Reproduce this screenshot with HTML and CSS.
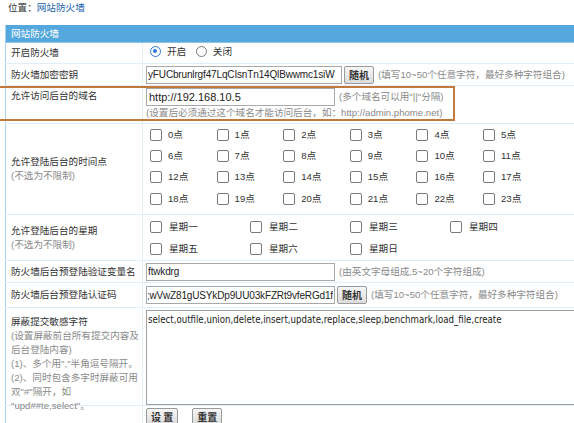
FILE: index.html
```html
<!DOCTYPE html>
<html lang="zh">
<head>
<meta charset="utf-8">
<link rel="stylesheet" href="styles.css">
</head>
<body>
<div class="page">
  <div class="crumb">位置：<a class="link">网站防火墙</a></div>
  <table class="form">
    <colgroup><col class="c1"><col class="c2"></colgroup>
    <tr class="head"><td colspan="2">网站防火墙</td></tr>
    <tr class="r-open">
      <td class="lab">开启防火墙</td>
      <td class="val">
        <span class="radio"><span class="rdo on"></span>开启</span>
        <span class="radio"><span class="rdo"></span>关闭</span>
      </td>
    </tr>
    <tr class="r-key">
      <td class="lab">防火墙加密密钥</td>
      <td class="val"><span class="line"><input class="txt key w196" value="yFUCbrunlrgf47LqCIsnTn14QlBwwmc1siW"><button class="btn">随机</button><span class="hint">(填写10~50个任意字符，最好多种字符组合)</span></span></td>
    </tr>
    <tr class="r-domain">
      <td class="lab top">允许访问后台的域名</td>
      <td class="val top">
        <span class="line"><input class="txt w188" value="http://192.168.10.5"><span class="hint">(多个域名可以用"||"分隔)</span></span>
        <div class="hint sub">(设置后必须通过这个域名才能访问后台，如：http://admin.phome.net)</div>
      </td>
    </tr>
    <tr class="r-time">
      <td class="lab">允许登陆后台的时间点<div class="hint">(不选为不限制)</div></td>
      <td class="val top">
        <div class="hours">
          <span class="ck"><span class="box"></span>0点</span><span class="ck"><span class="box"></span>1点</span><span class="ck"><span class="box"></span>2点</span><span class="ck"><span class="box"></span>3点</span><span class="ck"><span class="box"></span>4点</span><span class="ck"><span class="box"></span>5点</span>
          <span class="ck"><span class="box"></span>6点</span><span class="ck"><span class="box"></span>7点</span><span class="ck"><span class="box"></span>8点</span><span class="ck"><span class="box"></span>9点</span><span class="ck"><span class="box"></span>10点</span><span class="ck"><span class="box"></span>11点</span>
          <span class="ck"><span class="box"></span>12点</span><span class="ck"><span class="box"></span>13点</span><span class="ck"><span class="box"></span>14点</span><span class="ck"><span class="box"></span>15点</span><span class="ck"><span class="box"></span>16点</span><span class="ck"><span class="box"></span>17点</span>
          <span class="ck"><span class="box"></span>18点</span><span class="ck"><span class="box"></span>19点</span><span class="ck"><span class="box"></span>20点</span><span class="ck"><span class="box"></span>21点</span><span class="ck"><span class="box"></span>22点</span><span class="ck"><span class="box"></span>23点</span>
        </div>
      </td>
    </tr>
    <tr class="r-week">
      <td class="lab">允许登陆后台的星期<div class="hint">(不选为不限制)</div></td>
      <td class="val top">
        <div class="weeks">
          <span class="ck"><span class="box"></span>星期一</span><span class="ck"><span class="box"></span>星期二</span><span class="ck"><span class="box"></span>星期三</span><span class="ck"><span class="box"></span>星期四</span>
          <span class="ck"><span class="box"></span>星期五</span><span class="ck"><span class="box"></span>星期六</span><span class="ck"><span class="box"></span>星期日</span>
        </div>
      </td>
    </tr>
    <tr class="r-var">
      <td class="lab">防火墙后台预登陆验证变量名</td>
      <td class="val"><span class="line"><input class="txt key w188" value="ftwkdrg"><span class="hint">(由英文字母组成,5~20个字符组成)</span></span></td>
    </tr>
    <tr class="r-auth">
      <td class="lab">防火墙后台预登陆认证码</td>
      <td class="val"><span class="line"><input class="txt key w188 rt" value="Jf;wVwZ81gUSYkDp9UU03kFZRt9vfeRGd1f"><button class="btn">随机</button><span class="hint">(填写10~50个任意字符，最好多种字符组合)</span></span></td>
    </tr>
    <tr class="r-words">
      <td class="lab top"><div class="wlab">屏蔽提交敏感字符<div class="hint">(设置屏蔽前台所有提交内容及<br>后台登陆内容)<br>(1)、多个用","半角逗号隔开。<br>(2)、同时包含多字时屏蔽可用<br>双"#"隔开，如<br>"upd##te,select"。</div></div></td>
      <td class="val top"><div class="clip"><textarea class="area">select,outfile,union,delete,insert,update,replace,sleep,benchmark,load_file,create</textarea></div></td>
    </tr>
    <tr class="r-btns">
      <td class="lab"></td>
      <td class="val top"><button class="btn sbtn">设 置</button><button class="btn sbtn">重置</button></td>
    </tr>
  </table>
  <div class="mark"></div>
</div>
</body>
</html>
```
FILE: styles.css
```css
html, body { margin: 0; padding: 0; overflow: hidden; background: #fff; }
body { font-family: "Liberation Sans", "Noto Sans CJK SC", sans-serif; font-size: 9.6px; line-height: 14px; color: #333; }
.page { position: relative; padding: 0 0 0 5px; width: 600px; }
.crumb { height: 25px; line-height: 16px; padding-left: 3px; color: #333; }
.link { color: #1b5fae; }
.form { width: 595px; border-collapse: collapse; border-left: 1px solid #a8d2ee; table-layout: fixed; }
.c1 { width: 137px; }
.c2 { width: 458px; }
.form td { padding: 0; border-bottom: 1px solid #e2eef7; }
.head td { background: #55a8de; color: #fff; height: 17px; padding-left: 5px; border-bottom: 1px solid #8cc4ea; }
.lab { padding-left: 5px !important; border-right: 1px solid #e6f0f7; vertical-align: middle; white-space: nowrap; }
.lab.top, .val.top { vertical-align: top; }
.val { padding-left: 3px !important; vertical-align: middle; white-space: nowrap; overflow: hidden; }
.hint { color: #8a8a8a; }
.line { display: flex; align-items: center; }
.line .hint { margin-left: 4px; }
.txt { box-sizing: border-box; height: 18px; border: 1px solid #a9a9a9; padding: 0 2px; font-family: "Liberation Sans", sans-serif; font-size: 11px; color: #222; margin: 0; flex: none; }
.txt.key { font-size: 10px; letter-spacing: -0.15px; padding: 0 1px; }
.txt.rt { direction: rtl; text-align: left; }
.w196 { width: 196px; }
.w188 { width: 189px; }
.btn { height: 18px; margin: 0 0 0 2px; padding: 0 4px; border: 1px solid #9a9a9a; border-radius: 2px; background: linear-gradient(#f6f6f6, #dcdcdc); font-family: "Noto Sans CJK SC", sans-serif; font-size: 10px; font-weight: bold; color: #333; line-height: 14px; flex: none; }
.r-open td { height: 20px; }
.r-key td { height: 21px; }
.r-domain td { height: 34px; }
.r-domain .lab { padding-top: 3px; }
.r-domain .val { padding-top: 2px; }
.sub { line-height: 14px; }
.radio { display: inline-flex; align-items: center; margin-left: 4px; margin-right: 3px; }
.rdo { box-sizing: border-box; width: 11px; height: 11px; border: 1px solid #777; border-radius: 50%; margin-right: 6px; background: #fff; position: relative; }
.rdo.on { border: 1.5px solid #2b7bd6; }
.rdo.on::after { content: ""; position: absolute; left: 2px; top: 2px; width: 4px; height: 4px; border-radius: 50%; background: #2b7bd6; }
.r-time td { height: 90px; }
.hours { display: grid; grid-template-columns: repeat(6, 66.6px); grid-template-rows: repeat(4, 21.4px); padding-top: 0; }
.weeks { display: grid; grid-template-columns: repeat(4, 100px); grid-template-rows: repeat(2, 22px); padding-top: 1px; }
.r-week td { height: 43px; }
.ck { display: flex; align-items: center; padding-left: 4px; }
.box { box-sizing: border-box; width: 12px; height: 12px; border: 1px solid #7a7a7a; border-radius: 2px; margin-right: 6px; background: #fff; flex: none; }
.weeks .box { margin-right: 7px; }
.r-var td { height: 21px; }
.r-auth td { height: 24px; }
.r-words td { height: 97px; }
.wlab { height: 90px; padding-top: 7px; }
.clip { overflow: hidden; padding-top: 2px; height: 95px; }
.area { box-sizing: border-box; display: block; width: 440px; height: 95px; border: 1px solid #a0a0a0; margin: 0; padding: 2px 1px; resize: none; font-family: "DejaVu Sans Condensed", "DejaVu Sans", sans-serif; font-size: 9.6px; line-height: 13px; color: #222; }
.r-btns td { height: 20px; border-bottom: none; }
.sbtn { margin: 2px 14px 0 0; height: 17px; font-weight: bold; }
.mark { position: absolute; left: -2px; top: 86px; width: 457px; height: 35px; box-sizing: border-box; border: 2px solid #c27a3c; pointer-events: none; }
```
